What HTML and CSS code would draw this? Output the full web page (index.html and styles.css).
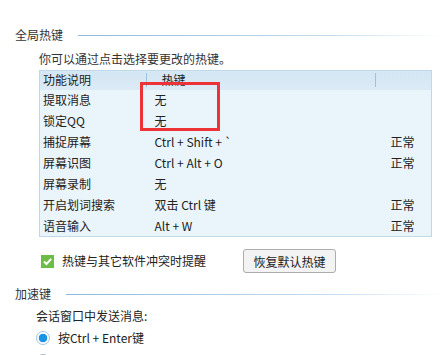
FILE: index.html
```html
<!DOCTYPE html>
<html lang="zh-CN">
<head>
    <meta charset="UTF-8">
    <title>热键设置</title>
    <link rel="stylesheet" href="styles.css">
</head>
<body>
    <div class="page">
        <div class="section-title">
            <span>全局热键</span>
            <div class="rule"></div>
        </div>

        <p class="hint">你可以通过点击选择要更改的热键。</p>

        <div class="table-wrap">
            <table class="hotkeys">
                <thead>
                    <tr>
                        <th class="col-name">功能说明</th>
                        <th class="col-key">热键</th>
                        <th class="col-state"></th>
                    </tr>
                </thead>
                <tbody>
                    <tr><td>提取消息</td><td>无</td><td></td></tr>
                    <tr><td>锁定QQ</td><td>无</td><td></td></tr>
                    <tr><td>捕捉屏幕</td><td>Ctrl + Shift + `</td><td>正常</td></tr>
                    <tr><td>屏幕识图</td><td>Ctrl + Alt + O</td><td>正常</td></tr>
                    <tr><td>屏幕录制</td><td>无</td><td></td></tr>
                    <tr><td>开启划词搜索</td><td>双击 Ctrl 键</td><td>正常</td></tr>
                    <tr><td>语音输入</td><td>Alt + W</td><td>正常</td></tr>
                </tbody>
            </table>
            <!-- red highlight drawn over the table -->
            <div class="highlight"></div>
        </div>

        <div class="options-row">
            <label class="check">
                <svg width="13" height="13" viewBox="0 0 13 13">
                    <rect width="13" height="13" fill="#6cbd45"/>
                    <path d="M3 6.5 L5.5 9 L10.2 3.8" fill="none" stroke="#fff" stroke-width="2"/>
                </svg>
                <span>热键与其它软件冲突时提醒</span>
            </label>
            <button class="btn">恢复默认热键</button>
        </div>

        <div class="section-title second">
            <span>加速键</span>
            <div class="rule"></div>
        </div>

        <p class="send-label">会话窗口中发送消息:</p>

        <div class="radio-row first">
            <span class="radio checked"></span>
            <span>按Ctrl + Enter键</span>
        </div>
        <div class="radio-row next">
            <span class="radio"></span>
            <span>按Enter键</span>
        </div>
    </div>
</body>
</html>
```

FILE: styles.css
```css
* {
    margin: 0;
    padding: 0;
    box-sizing: border-box;
}
body {
    font-family: "Noto Sans CJK SC", "Noto Sans", sans-serif;
    font-size: 12px;
    line-height: 16px;
    color: #222;
    background-color: #fff;
    overflow: hidden;
}
.page {
    padding-left: 15px;
}
.section-title {
    display: flex;
    align-items: center;
    height: 16px;
    margin-top: 27px;
    color: #333;
}
.section-title.second {
    margin-top: 13px;
}
.rule {
    flex: 1;
    height: 1px;
    margin-left: 15px;
    background: linear-gradient(to right, #8dbadc, #c4dcee 70%, #fff);
}
.hint {
    margin: 8px 0 0 24px;
    color: #333;
}
.table-wrap {
    position: relative;
    width: 393px;
    margin: 3px 0 0 24px;
}
.hotkeys {
    width: 393px;
    border-collapse: collapse;
    border: 1px solid #c0d9ea;
    background-color: #eaf5fb;
    table-layout: fixed;
}
.hotkeys th {
    height: 19px;
    font-weight: normal;
    text-align: left;
    background: linear-gradient(#d3e6f3, #dcebf6);
    padding: 0;
}
.hotkeys th.col-name {
    width: 107px;
    padding-left: 3px;
    background: linear-gradient(#9cc4e0, #9cc4e0) no-repeat right center / 1px 14px,
                linear-gradient(#d3e6f3, #dcebf6);
}
.hotkeys th.col-key {
    width: 229px;
    padding-left: 15px;
    background: linear-gradient(#9cc4e0, #9cc4e0) no-repeat right center / 1px 14px,
                linear-gradient(#d3e6f3, #dcebf6);
}
.hotkeys td {
    height: 21px;
    padding: 0 0 0 8px;
    white-space: nowrap;
}
.hotkeys td:first-child {
    padding-left: 3px;
}
.hotkeys td:last-child {
    padding-left: 15px;
}
.highlight {
    position: absolute;
    left: 101px;
    top: 12px;
    width: 80px;
    height: 49px;
    border: 3px solid #ee3338;
}
.options-row {
    display: flex;
    align-items: center;
    height: 24px;
    margin: 12px 0 0 26px;
}
.check {
    display: flex;
    align-items: center;
    gap: 8px;
    width: 202px;
}
.check svg {
    display: block;
}
.btn {
    height: 24px;
    width: 93px;
    font-family: inherit;
    font-size: 12px;
    color: #222;
    background-color: #f3f3f3;
    border: 1px solid #adadad;
    border-radius: 3px;
}
.send-label {
    margin: 6px 0 0 21px;
}
.radio-row {
    display: flex;
    align-items: center;
    gap: 8px;
    height: 20px;
    margin-left: 21px;
}
.radio-row.first {
    margin-top: 4px;
}
.radio-row.next {
    margin-top: 3px;
}
.radio {
    width: 14px;
    height: 14px;
    border-radius: 50%;
    border: 1px solid #a9b3bb;
    background-color: #fff;
}
.radio.checked {
    border-color: #9ec7e6;
    background: radial-gradient(circle, #1a95e6 0 4px, #fff 4.6px);
}
```
